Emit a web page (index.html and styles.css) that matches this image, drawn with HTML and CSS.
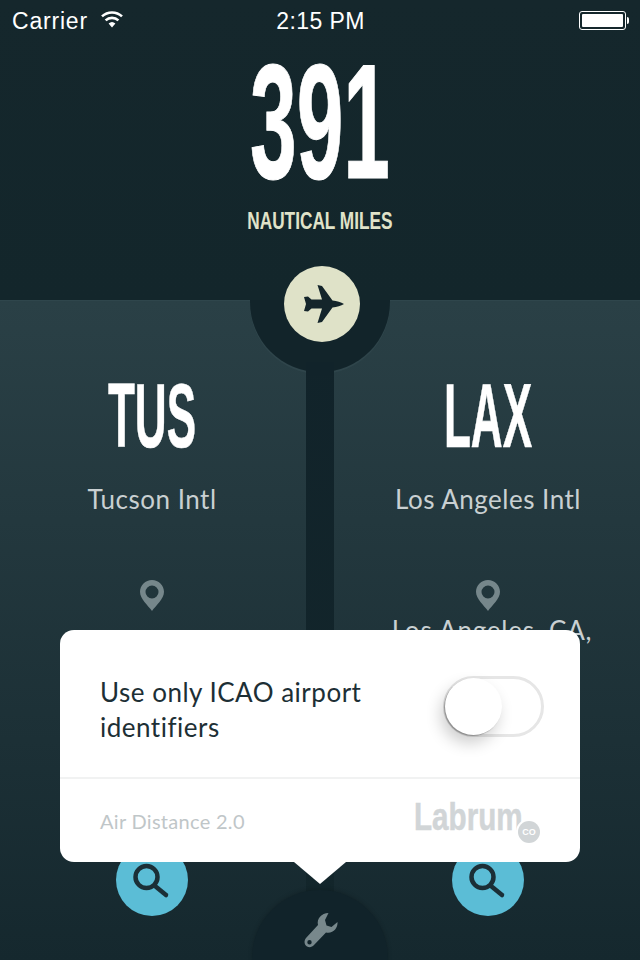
FILE: index.html
```html
<!DOCTYPE html>
<html lang="en">
<head>
<meta charset="utf-8">
<title>Air Distance</title>
<link rel="stylesheet" href="styles.css">
</head>
<body>
<div class="app">
  <header class="top">
    <div class="status">
      <div class="status-left">
        <span class="carrier">Carrier</span>
        <svg class="wifi" viewBox="0 0 24 18" width="24" height="18"><path d="M12 17.500 8.600 13.600a5 5 0 0 1 6.800 0Z" fill="#fff"/><path d="M5.600 10.400a9.400 9.400 0 0 1 12.800 0M2 6.400a14.600 14.600 0 0 1 20 0" fill="none" stroke="#fff" stroke-width="2.600"/></svg>
      </div>
      <div class="status-time">2:15 PM</div>
      <div class="status-right">
        <div class="battery"><div class="battery-fill"></div></div>
        <div class="battery-tip"></div>
      </div>
    </div>
    <div class="total">391</div>
    <div class="unit">NAUTICAL MILES</div>
  </header>

  <main class="route">
    <section class="airport">
      <h2 class="code">TUS</h2>
      <p class="name">Tucson Intl</p>
      <svg class="pin" viewBox="0 0 24 31" width="24" height="31"><path fill-rule="evenodd" d="M12 0C5.400 0 0 5.200 0 11.800 0 19 8 25.500 12 31c4-5.500 12-12 12-19.200C24 5.200 18.600 0 12 0Zm0 5.500a6.500 6.500 0 1 1 0 13 6.500 6.500 0 0 1 0-13Z" fill="#76878b"/></svg>
      <p class="city">Tucson, AZ</p>
      <div class="search"><svg viewBox="0 0 72 72" width="72" height="72"><circle cx="30.500" cy="33" r="11" fill="none" stroke="#1b2f37" stroke-width="4.500"/><path d="M39 42 50 51" stroke="#1b2f37" stroke-width="4.500" stroke-linecap="round"/></svg></div>
    </section>
    <div class="spine"></div>
    <section class="airport">
      <h2 class="code">LAX</h2>
      <p class="name">Los Angeles Intl</p>
      <svg class="pin" viewBox="0 0 24 31" width="24" height="31"><path fill-rule="evenodd" d="M12 0C5.400 0 0 5.200 0 11.800 0 19 8 25.500 12 31c4-5.500 12-12 12-19.200C24 5.200 18.600 0 12 0Zm0 5.500a6.500 6.500 0 1 1 0 13 6.500 6.500 0 0 1 0-13Z" fill="#76878b"/></svg>
      <p class="city">Los Angeles, CA, United States</p>
      <div class="search"><svg viewBox="0 0 72 72" width="72" height="72"><circle cx="30.500" cy="33" r="11" fill="none" stroke="#1b2f37" stroke-width="4.500"/><path d="M39 42 50 51" stroke="#1b2f37" stroke-width="4.500" stroke-linecap="round"/></svg></div>
    </section>
  </main>

  <div class="hub">
    <div class="plane-badge">
      <svg viewBox="0 0 76 76" width="76" height="76"><path d="M60 38C57 36 53 35 48.500 34.500L38 20 33.500 19 38 33.500H27.500L24 30.500 20 31 22 38 20 45 24 45.500 27.500 42.500H38L33.500 57 38 56 48.500 41.500C53 41 57 40 60 38Z" fill="#14252b"/></svg>
    </div>
  </div>

  <div class="tools">
    <svg class="wrench" viewBox="0 0 40 40" width="40" height="40"><path fill-rule="evenodd" d="M26.500 3C19.500 3 14.500 9 16 15L4 28C1.500 31 2.500 35 5 36.500 8 38 10 37 12 35L24 22.500C31 24 36 18 35.500 12L29.500 17 24.500 15.500 23 10ZM7.500 30a2.200 2.200 0 1 1 0 4.400 2.200 2.200 0 0 1 0-4.400Z" fill="#78888c"/></svg>
  </div>

  <aside class="popover">
    <div class="setting">
      <div class="setting-label">Use only ICAO airport identifiers</div>
      <div class="toggle"><div class="thumb"></div></div>
    </div>
    <div class="about">
      <span class="version">Air Distance 2.0</span>
      <div class="logo"><span class="logo-word">Labrum</span><span class="logo-co">CO</span></div>
    </div>
    <div class="arrow"></div>
  </aside>
</div>
</body>
</html>
```
FILE: styles.css
```css
* { box-sizing: border-box; }
html, body { margin: 0; padding: 0; background: #15272c; }
.app {
  position: relative;
  width: 640px;
  height: 960px;
  overflow: hidden;
  display: flex;
  flex-direction: column;
  font-family: "Lato", "Liberation Sans", sans-serif;
}
.top {
  height: 300px;
  flex: none;
  background: linear-gradient(#15272c, #13262b);
  display: flex;
  flex-direction: column;
  align-items: center;
}
.status {
  width: 100%;
  height: 42px;
  padding: 0 11px 0 12px;
  display: grid;
  grid-template-columns: 1fr auto 1fr;
  align-items: center;
  color: #fff;
  font: 23px "Liberation Sans", sans-serif;
}
.status-left { display: flex; align-items: center; gap: 12px; }
.carrier { letter-spacing: 0.8px; }
.wifi { margin-top: -5px; }
.status-time { letter-spacing: 0.4px; }
.status-right { display: flex; justify-content: flex-end; align-items: center; margin-top: -2px; }
.battery {
  width: 47px;
  height: 19px;
  padding: 2px;
  border: 1px solid #fff;
  border-radius: 3px;
}
.battery-fill { height: 100%; background: #fff; border-radius: 1px; }
.battery-tip { width: 2px; height: 7px; background: #fff; border-radius: 0 2px 2px 0; margin-left: 1px; }
.total {
  margin-top: 2px;
  height: 156px;
  font: 700 163px/156px "Liberation Sans", sans-serif;
  color: #fff;
  transform: scaleX(0.515);
  -webkit-text-stroke: 1px #fff;
}
.unit {
  margin-top: 7px;
  font: 700 23px/28px "Liberation Sans", sans-serif;
  color: #e0e3c9;
  transform: scaleX(0.75);
  white-space: nowrap;
}
.route {
  flex: 1;
  display: grid;
  grid-template-columns: 306px 28px 306px;
  background: linear-gradient(#2a4046, #15282e);
  border-top: 1px solid #2f464c;
}
.spine {
  background: linear-gradient(#11232a, #13262b);
}
.airport {
  display: flex;
  flex-direction: column;
  align-items: center;
  color: #fff;
}
.airport:first-child { padding-right: 2px; }
.airport:last-child { padding-left: 2px; }
.code {
  margin: 73px 0 0;
  height: 84px;
  font: 700 90px/84px "Liberation Sans", sans-serif;
  transform: scaleX(0.49);
  -webkit-text-stroke: 0.6px #fff;
}
.name {
  margin: 24px 0 0;
  font-size: 26px;
  line-height: 34px;
  color: #c9d0d2;
  white-space: nowrap;
  letter-spacing: 0.5px;
}
.pin { margin-top: 64px; flex: none; }
.city {
  margin: 1px 0 0;
  width: 240px;
  height: 70px;
  display: flex;
  align-items: center;
  justify-content: center;
  text-align: center;
  font-size: 26px;
  line-height: 34px;
  color: #c9d0d2;
  letter-spacing: 0.8px;
}
.airport:last-child .city { padding-left: 8px; }
.search {
  margin-top: 162px;
  width: 72px;
  height: 72px;
  border-radius: 50%;
  background: #5bbdd6;
}
.search svg { display: block; }
.hub {
  position: absolute;
  left: 250px;
  top: 232px;
  width: 140px;
  height: 140px;
}
.hub::before {
  content: "";
  position: absolute;
  inset: 0;
  border-radius: 50%;
  background: linear-gradient(rgba(18, 36, 42, 0) 25%, #12242a 48%);
  box-shadow: 0 2px 0 #2f454b;
  clip-path: inset(68px -4px -4px -4px);
}
.hub::after {
  content: "";
  position: absolute;
  left: 56px;
  top: 130px;
  width: 28px;
  height: 14px;
  background: #11232a;
}
.plane-badge {
  position: absolute;
  left: 34px;
  top: 34px;
  width: 76px;
  height: 76px;
  border-radius: 50%;
  background: #dfe2c8;
}
.plane-badge svg { display: block; }
.tools {
  position: absolute;
  left: 252px;
  top: 890px;
  width: 136px;
  height: 136px;
  border-radius: 50%;
  background: #11232a;
  box-shadow: 0 -1px 4px rgba(0, 0, 0, 0.18);
}
.wrench { position: absolute; left: 50px; top: 20px; }
.popover {
  position: absolute;
  left: 60px;
  top: 630px;
  width: 520px;
  height: 232px;
  background: #fff;
  border-radius: 14px;
  display: flex;
  flex-direction: column;
}
.setting {
  height: 149px;
  flex: none;
  padding: 6px 36px 0 40px;
  display: flex;
  align-items: center;
  justify-content: space-between;
  border-bottom: 2px solid #f1f2f2;
}
.setting-label {
  width: 300px;
  margin-top: 6px;
  font-size: 26px;
  line-height: 35px;
  color: #1d2f35;
  letter-spacing: 0.5px;
}
.toggle {
  position: relative;
  width: 101px;
  height: 61px;
  border: 3px solid #e6e6e6;
  border-radius: 31px;
  background: #fff;
}
.thumb {
  position: absolute;
  left: -1px;
  top: -1px;
  width: 57px;
  height: 57px;
  border-radius: 50%;
  background: #fff;
  box-shadow: -1px 1px 1px rgba(0, 0, 0, 0.28), -4px 8px 16px rgba(0, 0, 0, 0.2);
}
.about {
  flex: 1;
  padding: 0 40px;
  display: flex;
  align-items: center;
  justify-content: space-between;
}
.version { font-size: 20px; color: #bfc6c8; letter-spacing: 0.3px; }
.logo { position: relative; width: 126px; height: 60px; }
.logo-word {
  position: absolute;
  left: 0;
  top: 4px;
  font: 700 39px/44px "Liberation Sans", sans-serif;
  color: #d1d5d7;
  transform: scaleX(0.76);
  transform-origin: 0 50%;
  white-space: nowrap;
  -webkit-text-stroke: 0.5px #d1d5d7;
}
.logo-co {
  position: absolute;
  left: 104px;
  top: 30px;
  width: 22px;
  height: 22px;
  border-radius: 50%;
  background: #d1d5d7;
  box-shadow: 0 0 0 2px #fff;
  color: #fff;
  font: 700 9px/22px "Liberation Sans", sans-serif;
  text-align: center;
}
.arrow {
  position: absolute;
  left: 234px;
  top: 232px;
  width: 52px;
  height: 22px;
  background: #fff;
  clip-path: polygon(0 0, 100% 0, 50% 100%);
}
```
